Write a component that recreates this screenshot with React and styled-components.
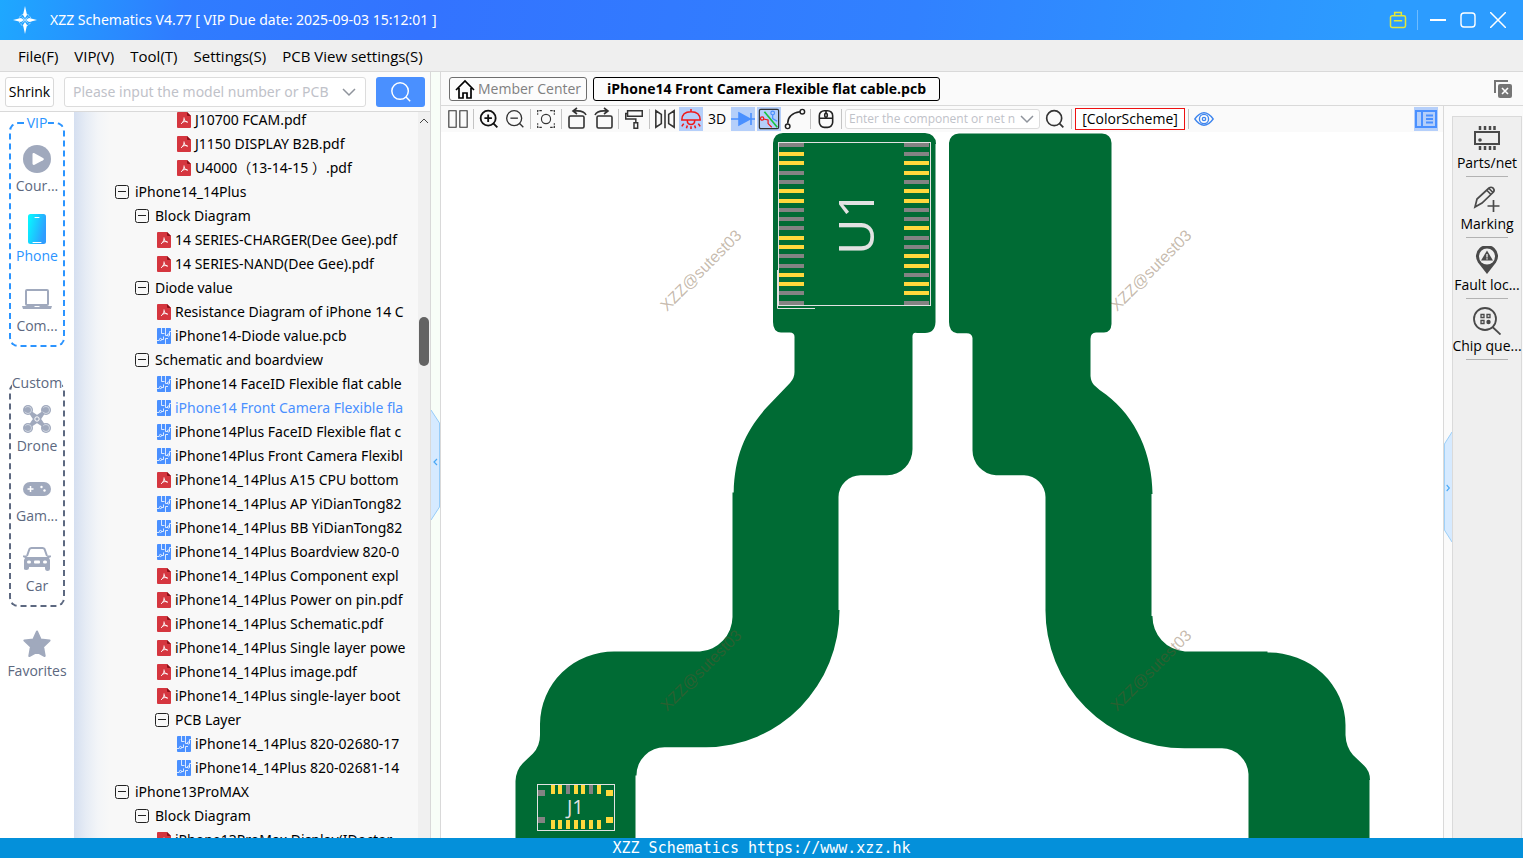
/**
 *
 * SchematicsViewer
 *
 */

import React, { useState } from 'react';
import styled, { createGlobalStyle } from 'styled-components';

const GlobalStyle = createGlobalStyle`
  * {
    box-sizing: border-box;
  }

  body {
    margin: 0;
    overflow: hidden;
  }

  body, button, input {
    font-family: 'Open Sans', 'Noto Sans CJK SC', sans-serif;
    font-size: 14px;
    line-height: 20px;
    color: #000000;
  }

  button {
    padding: 0;
    border: none;
    background: none;
    cursor: pointer;
  }

  svg {
    display: block;
    flex: none;
  }
`;

const Page = styled.div`
  display: flex;
  flex-direction: column;
  height: 100vh;
  background-color: #fafafa;
`;

/* title bar */

const TitleBar = styled.header`
  display: flex;
  align-items: center;
  flex: none;
  height: 40px;
  padding: 0 10px 0 12px;
  color: #ffffff;
  background: linear-gradient(100deg, #1ea8ff 0%, #2f7cff 12%, #3373ff 28%, #3181ff 60%, #2c9cff 90%);
`;

const Title = styled.h1`
  flex: 1;
  margin: 0 0 0 12px;
  font-family: 'Noto Sans', sans-serif;
  font-size: 14px;
  font-weight: 400;
  line-height: 20px;
`;

const WindowButton = styled.button`
  display: flex;
  align-items: center;
  justify-content: center;
  width: 30px;
  height: 30px;
`;

const WindowDivider = styled.span`
  width: 1px;
  height: 20px;
  margin: 0 5px 0 4px;
  background-color: #6fbcff;
`;

const MenuBar = styled.nav`
  display: flex;
  align-items: center;
  flex: none;
  gap: 16px;
  height: 32px;
  padding: 0 18px;
  background-color: #efefef;
  border-bottom: 1px solid #d9d9d9;
`;

const MenuButton = styled.button`
  font-size: 15px;
`;

const Body = styled.div`
  display: flex;
  flex: 1;
  min-height: 0;
`;

/* left pane */

const LeftPane = styled.aside`
  display: flex;
  flex-direction: column;
  flex: none;
  width: 431px;
  border-right: 1px solid #d9d9d9;
  background-color: #fcfcfc;
`;

const SearchRow = styled.form`
  display: flex;
  align-items: center;
  flex: none;
  gap: 10px;
  height: 40px;
  padding: 0 5px;
  border-bottom: 1px solid #d9d9d9;
`;

const ShrinkButton = styled.button`
  width: 49px;
  height: 30px;
  border: 1px solid #d9d9d9;
  border-radius: 3px;
  background-color: #ffffff;
`;

const Combo = styled.label`
  display: flex;
  align-items: center;
  flex: ${({ $small }) => ($small ? '0 0 195px' : 1)};
  min-width: 0;
  height: ${({ $small }) => ($small ? 20 : 30)}px;
  padding: ${({ $small }) => ($small ? '0 5px 0 3px' : '0 9px 0 8px')};
  gap: 3px;
  border: 1px solid #dcdcdc;
  border-radius: 3px;
  background-color: #ffffff;
`;

const ComboInput = styled.input`
  flex: 1;
  min-width: 0;
  padding: 0;
  border: none;
  outline: none;
  background: none;
  font-family: ${({ $small }) => ($small ? "'Open Sans'" : "'Noto Sans'")}, sans-serif;
  font-size: ${({ $small }) => ($small ? 12 : 14)}px;
  line-height: 18px;

  &::placeholder {
    color: #bfc2c9;
    opacity: 1;
  }
`;

const SearchButton = styled.button`
  display: flex;
  align-items: center;
  justify-content: center;
  width: 49px;
  height: 30px;
  border-radius: 3px;
  background-color: #4a90ff;
`;

const LeftContent = styled.div`
  display: flex;
  flex: 1;
  min-height: 0;
`;

const Rail = styled.nav`
  display: flex;
  flex-direction: column;
  align-items: center;
  flex: none;
  width: 74px;
  padding-top: 10px;
  background-color: #ffffff;
`;

const RailGroup = styled.section`
  display: flex;
  flex-direction: column;
  align-items: center;
  flex: none;
  width: 56px;
  height: 225px;
  margin-bottom: 16px;
  border: 2px dashed ${({ $color }) => $color};
  border-radius: 9px;

  & + & {
    margin-top: 19px;
  }
`;

const RailTitle = styled.h2`
  margin: -11px 0 5px;
  font-size: 14px;
  font-weight: 400;
  line-height: 20px;
  color: ${({ $color }) => $color};
  background-color: #ffffff;
`;

const RailButton = styled.button`
  display: flex;
  flex-direction: column;
  align-items: center;
  justify-content: flex-end;
  flex: none;
  gap: 1px;
  height: 60px;
  margin-bottom: 10px;
  padding-bottom: 2px;
  white-space: nowrap;
  color: ${({ $active }) => ($active ? '#2b94ff' : '#5c6880')};
`;

const RailIcon = styled.span`
  display: flex;
  align-items: center;
  justify-content: center;
  width: 32px;
  height: 32px;
`;

const TreePane = styled.div`
  display: flex;
  flex: 1;
  min-width: 0;
  overflow: hidden;
  background: linear-gradient(90deg, #d5dff0 0, #e6ecf5 12px, #f3f5f8 24px, #f8f8f8 36px);
`;

const Tree = styled.ul`
  flex: 1;
  min-width: 0;
  margin: -4px 12px 0 0;
  padding: 0;
  list-style: none;
`;

const TreeRow = styled.li`
  height: 24px;
  padding-left: ${({ $level }) => 21 + $level * 20}px;
`;

const TreeButton = styled.button`
  display: flex;
  align-items: center;
  gap: ${({ $folder }) => ($folder ? 6 : 4)}px;
  width: 100%;
  height: 24px;
  padding-left: ${({ $folder }) => ($folder ? 0 : 2)}px;
  font-family: 'Noto Sans', 'Noto Sans CJK SC', sans-serif;
  white-space: nowrap;
  overflow: hidden;
  color: ${({ $active }) => ($active ? '#4a90ff' : '#000000')};
`;

const ScrollTrack = styled.div`
  display: flex;
  flex-direction: column;
  align-items: center;
  flex: none;
  gap: 193px;
  width: 12px;
  padding-top: 5px;
  background-color: #f0f0f0;
`;

const ScrollThumb = styled.div`
  flex: none;
  width: 10px;
  height: 49px;
  border-radius: 5px;
  background-color: #636363;
`;

const Gutter = styled.div`
  display: flex;
  align-items: flex-start;
  flex: none;
  width: ${({ $side }) => ($side === 'left' ? 10 : 9)}px;
  padding-top: ${({ $side }) => ($side === 'left' ? 337 : 325)}px;
  border-${({ $side }) => ($side === 'left' ? 'right' : 'left')}: 1px solid #d9d9d9;
  background-color: ${({ $side }) => ($side === 'left' ? '#f8fef8' : '#fafafa')};
`;

/* work area */

const WorkArea = styled.main`
  display: flex;
  flex-direction: column;
  flex: 1;
  min-width: 0;
`;

const TabRow = styled.div`
  display: flex;
  align-items: center;
  flex: none;
  gap: 6px;
  height: 34px;
  padding: 0 11px 0 8px;
  border-bottom: 1px solid #d9d9d9;
`;

const Tab = styled.button`
  display: flex;
  align-items: center;
  justify-content: center;
  gap: 3px;
  height: 24px;
  padding: 0 ${({ $active }) => ($active ? 13 : 5)}px;
  border: 1px solid ${({ $active }) => ($active ? '#000000' : '#6e6e6e')};
  border-radius: 3px;
  background-color: #fcfcfc;
  font-weight: ${({ $active }) => ($active ? 700 : 400)};
  color: ${({ $active }) => ($active ? '#000000' : '#808080')};
  white-space: nowrap;
`;

const CloseAll = styled.button`
  margin-left: auto;
`;

const WorkBody = styled.div`
  display: flex;
  flex: 1;
  min-height: 0;
`;

const Viewer = styled.section`
  display: flex;
  flex-direction: column;
  flex: 1;
  min-width: 0;
`;

const Toolbar = styled.div`
  display: flex;
  align-items: center;
  flex: none;
  gap: 2px;
  height: 26px;
  padding: 0 5px;
`;

const ToolButton = styled.button`
  display: flex;
  align-items: center;
  justify-content: center;
  flex: none;
  width: ${({ $wide }) => ($wide ? 26 : 24)}px;
  height: 24px;
  margin-left: ${({ $end }) => ($end ? 'auto' : 0)};
  background-color: ${({ $active }) => ($active ? '#b5cffa' : 'transparent')};
`;

const ToolDivider = styled.span`
  flex: none;
  width: 1px;
  height: 20px;
  margin: 0 1px;
  background-color: #c4c4c4;
`;

const SchemeButton = styled.button`
  flex: none;
  width: 110px;
  height: 22px;
  border: 1px solid #ee1111;
  background-color: #ffffff;
`;

const Canvas = styled.div`
  flex: 1;
  min-height: 0;
  background-color: #ffffff;
`;

const Board = styled.svg`
  width: 100%;
  height: 100%;
`;

const PartLabel = styled.text`
  font-family: 'Open Sans', sans-serif;
  font-size: ${({ $size }) => $size}px;
  fill: #e2e2e2;
`;

const Watermark = styled.text`
  font-family: 'Liberation Sans', sans-serif;
  font-size: 16px;
  fill: rgba(110, 80, 45, 0.4);
`;

const SidePanel = styled.nav`
  display: flex;
  flex-direction: column;
  align-items: center;
  flex: none;
  width: 70px;
  margin: 10px 1px 0 0;
  border: 1px solid #dadada;
  border-bottom: none;
  background-color: #efefef;
`;

const SideButton = styled.button`
  display: flex;
  flex-direction: column;
  align-items: center;
  gap: 1px;
  height: 61px;
  padding-top: 7px;
  white-space: nowrap;

  &::after {
    content: '';
    width: 42px;
    height: 1px;
    margin-top: 2px;
    background-color: #b2b2b2;
  }
`;

const StatusBar = styled.footer`
  flex: none;
  height: 20px;
  font-family: 'DejaVu Sans Mono', monospace;
  font-size: 15px;
  line-height: 20px;
  text-align: center;
  color: #ffffff;
  background-color: #0490da;
`;

/* icons */

const Icon = ({ size = 22, children, ...rest }) => (
  <svg width={size} height={size} viewBox="0 0 24 24" fill="none" stroke="#333333" strokeWidth="1.6" aria-hidden="true" {...rest}>
    {children}
  </svg>
);

const Chevron = () => (
  <svg width="14" height="10" viewBox="0 0 14 10" fill="none" stroke="#8f949c" strokeWidth="1.5" aria-hidden="true">
    <path d="M1 2l6 6 6-6" />
  </svg>
);

const StarLogo = () => (
  <svg width="26" height="30" viewBox="0 0 26 30" aria-hidden="true">
    <circle cx="13" cy="15" r="6" fill="none" stroke="#bfe4ff" strokeDasharray="2 1" />
    <path d="M13 1l2 9-2 3-2-3zM13 29l2-9-2-3-2 3zM1 15l8-2 3 2-3 2zM25 15l-8-2-3 2 3 2z" fill="#ffffff" />
    <path d="M9 11l4 3 4-3-3 4 3 4-4-3-4 3 3-4z" fill="#9ed6ff" />
  </svg>
);

const Toggle = () => (
  <svg width="14" height="14" viewBox="0 0 14 14" fill="none" stroke="#222222" aria-hidden="true">
    <rect x="0.5" y="0.5" width="13" height="13" rx="2" />
    <path d="M3 6.5h8" />
  </svg>
);

const PdfIcon = () => (
  <svg width="14" height="16" viewBox="0 0 14 16" aria-hidden="true">
    <path d="M1 0h9l4 4v11a1 1 0 0 1-1 1H1a1 1 0 0 1-1-1V1a1 1 0 0 1 1-1z" fill="#d5363f" />
    <path d="M10 0l4 4h-3a1 1 0 0 1-1-1z" fill="#8c1019" />
    <path d="M7 5.5c.6 2.2-.6 4.800-3 6.300M7 7c.5 1.800 2 3 4 3.200M5.300 10.300c1.500-.7 3-.9 4.700-.6" fill="none" stroke="#ffffff" />
  </svg>
);

const PcbIcon = () => (
  <svg width="14" height="16" viewBox="0 0 14 16" fill="none" stroke="#ffffff" aria-hidden="true">
    <rect width="14" height="16" rx="1" fill="#4a90ff" stroke="none" />
    <path d="M4.500 0v5.500h3M8.500 0v7.500h2M6.500 8.500v3h-2M8.500 16v-5.500h2.500" strokeWidth="0.8" />
    <path d="M0 12.500h2M12.500 7V3.500H14" strokeWidth="0.8" />
    <circle cx="11.500" cy="7" r="1.100" strokeWidth="0.8" />
    <circle cx="3.500" cy="11.500" r="1.100" strokeWidth="0.8" />
  </svg>
);

const PlayIcon = () => (
  <svg width="28" height="28" viewBox="0 0 28 28" aria-hidden="true">
    <circle cx="14" cy="14" r="14" fill="#a0a9bd" />
    <path d="M9.500 9.500c0-1.300 1-1.700 2-1.200l8.500 4.600c1.100.6 1.100 1.700 0 2.300l-8.500 4.600c-1 .5-2 .1-2-1.200z" fill="#ffffff" />
  </svg>
);

const PhoneIcon = () => (
  <svg width="18" height="30" viewBox="0 0 18 30" aria-hidden="true">
    <defs>
      <linearGradient id="phone" x1="0" y1="0" x2="1" y2="0.4">
        <stop offset="0.1" stopColor="#08f4ff" />
        <stop offset="1" stopColor="#2f9dff" />
      </linearGradient>
    </defs>
    <rect width="18" height="30" rx="2.500" fill="url(#phone)" />
    <path d="M7 3.500h4M5 28.500h8" stroke="#ffffff" strokeLinecap="round" />
  </svg>
);

const LaptopIcon = () => (
  <svg width="30" height="20" viewBox="0 0 30 20" aria-hidden="true">
    <rect x="4" y="1" width="22" height="15" rx="1" fill="none" stroke="#a0a9bd" strokeWidth="2" />
    <path d="M0 17h12l1 1h4l1-1h12l-1 3H1z" fill="#a0a9bd" />
  </svg>
);

const DroneIcon = () => (
  <svg width="30" height="30" viewBox="0 0 30 30" aria-hidden="true">
    <path d="M6 6l9 6 9-6-6 9 6 9-9-6-9 6 6-9z" fill="#a0a9bd" stroke="#a0a9bd" strokeWidth="2" />
    {[[6, 6], [24, 6], [6, 24], [24, 24]].map(([x, y]) => (
      <g key={`${x}-${y}`}>
        <circle cx={x} cy={y} r="5" fill="#a0a9bd" />
        <circle cx={x} cy={y} r="3.500" fill="none" stroke="#e4e8ef" strokeWidth="0.7" strokeDasharray="9 4" />
      </g>
    ))}
    <circle cx="15" cy="15" r="2.200" fill="#a0a9bd" stroke="#ffffff" />
  </svg>
);

const GameIcon = () => (
  <svg width="28" height="14" viewBox="0 0 28 14" aria-hidden="true">
    <rect width="28" height="14" rx="7" fill="#a0a9bd" />
    <path d="M4.500 7h6M7.500 4v6" stroke="#ffffff" strokeWidth="1.500" />
    <circle cx="18.500" cy="5" r="1.200" fill="#ffffff" />
    <circle cx="21.500" cy="8.500" r="1.200" fill="#ffffff" />
  </svg>
);

const CarIcon = () => (
  <svg width="28" height="24" viewBox="0 0 28 24" aria-hidden="true">
    <path d="M4 9L6.500 2Q7 1 8.500 1h11q1.500 0 2 1L24 9" fill="none" stroke="#a0a9bd" strokeWidth="2" />
    <path d="M0 8.500h3l1.500 1.500h19l1.500-1.500h3V10l-2 1 1 2v9q0 2-2.500 2T22 21v-1H6v1q0 2-2.500 2T1 22v-9l1-2-2-1z" fill="#a0a9bd" />
    <rect x="4" y="13.500" width="4" height="3" rx="1.500" fill="#ffffff" />
    <rect x="11" y="13.500" width="6" height="3" rx="1" fill="#ffffff" />
    <rect x="20" y="13.500" width="4" height="3" rx="1.500" fill="#ffffff" />
  </svg>
);

const FavoriteIcon = () => (
  <svg width="28" height="28" viewBox="0 0 28 28" aria-hidden="true">
    <path d="M14 1.500l3.600 8 9 1-6.500 6.200 1.600 9.300L14 21.800 6.300 26l1.600-9.300L1.400 10.500l9-1z" fill="#a0a9bd" stroke="#a0a9bd" strokeWidth="2" strokeLinejoin="round" />
  </svg>
);

const PartsIcon = () => (
  <svg width="28" height="28" viewBox="0 0 28 28" fill="none" stroke="#4a4a4a" aria-hidden="true">
    <rect x="2" y="8" width="24" height="12" strokeWidth="2" />
    <circle cx="7" cy="16" r="1.800" fill="#4a4a4a" stroke="none" />
    <path d="M7 2v4M12 2v4M17 2v4M21.500 2v4M7 22v4M12 22v4M17 22v4M21.500 22v4" strokeWidth="2.500" />
  </svg>
);

const MarkingIcon = () => (
  <svg width="28" height="28" viewBox="0 0 28 28" fill="none" stroke="#4a4a4a" strokeWidth="1.700" aria-hidden="true">
    <path d="M2 22l2-8L16 3q2-1.500 4 0 2 2 .5 4L9 18zM14 5.500l4 4M16 3.500l4 4" />
    <path d="M20.500 15v12M14.500 21h12" />
  </svg>
);

const FaultIcon = () => (
  <svg width="28" height="28" viewBox="0 0 28 28" aria-hidden="true">
    <path d="M14 28L5 16.500A11 11 0 1 1 23 16.500z" fill="#4a4a4a" />
    <circle cx="14" cy="10.500" r="8" fill="#efefef" />
    <path d="M14 4.500l6 10H8z" fill="#4a4a4a" />
    <path d="M14 8v3.500M14 12.300v1.200" stroke="#efefef" strokeWidth="1.300" />
  </svg>
);

const ChipIcon = () => (
  <svg width="28" height="28" viewBox="0 0 28 28" fill="none" stroke="#4a4a4a" strokeWidth="1.800" aria-hidden="true">
    <circle cx="12" cy="12" r="11" />
    <path d="M19.500 20l8 7.500" />
    <path d="M8 7.500h3v3H8zM14 7.500h3v3h-3zM8 13.500h3v3H8z" strokeWidth="1.300" />
    <circle cx="15.500" cy="15" r="2.200" fill="#4a4a4a" stroke="none" />
  </svg>
);

const MagnifierIcon = ({ children, ...rest }) => (
  <Icon {...rest}>
    <circle cx="11" cy="11" r="9" />
    <path d="M17.500 17.500l4.500 4.500" />
    {children}
  </Icon>
);

const HandleIcon = ({ right }) => (
  <svg width={right ? 8 : 9} height="112" viewBox="0 0 9 112" preserveAspectRatio="none" fill="none" aria-hidden="true">
    <path d={right ? 'M9 1L.5 13v86L9 111' : 'M0 1l8.500 13v84L0 111'} fill="#d6eaff" stroke="#96ccf8" />
    <path d={right ? 'M3 54l3 3-3 3' : 'M6 50l-3 3 3 3'} stroke="#49a8f5" strokeWidth="1.200" />
  </svg>
);

/* data */

const menus = ['File(F)', 'VIP(V)', 'Tool(T)', 'Settings(S)', 'PCB View settings(S)'];

const railGroups = [
  {
    title: 'VIP',
    color: '#2b94ff',
    items: [
      { label: 'Cour...', icon: <PlayIcon /> },
      { label: 'Phone', icon: <PhoneIcon /> },
      { label: 'Com...', icon: <LaptopIcon /> },
    ],
  },
  {
    title: 'Custom',
    color: '#5c6880',
    items: [
      { label: 'Drone', icon: <DroneIcon /> },
      { label: 'Gam...', icon: <GameIcon /> },
      { label: 'Car', icon: <CarIcon /> },
    ],
  },
];

const treeItems = [
  [4, 'pdf', 'J10700 FCAM.pdf'],
  [4, 'pdf', 'J1150 DISPLAY B2B.pdf'],
  [4, 'pdf', 'U4000（13-14-15 ）.pdf'],
  [1, 'folder', 'iPhone14_14Plus'],
  [2, 'folder', 'Block Diagram'],
  [3, 'pdf', '14 SERIES-CHARGER(Dee Gee).pdf'],
  [3, 'pdf', '14 SERIES-NAND(Dee Gee).pdf'],
  [2, 'folder', 'Diode value'],
  [3, 'pdf', 'Resistance Diagram of iPhone 14 C'],
  [3, 'pcb', 'iPhone14-Diode value.pcb'],
  [2, 'folder', 'Schematic and boardview'],
  [3, 'pcb', 'iPhone14 FaceID Flexible flat cable'],
  [3, 'pcb', 'iPhone14 Front Camera Flexible fla'],
  [3, 'pcb', 'iPhone14Plus FaceID Flexible flat c'],
  [3, 'pcb', 'iPhone14Plus Front Camera Flexibl'],
  [3, 'pdf', 'iPhone14_14Plus A15 CPU bottom'],
  [3, 'pcb', 'iPhone14_14Plus AP YiDianTong82'],
  [3, 'pcb', 'iPhone14_14Plus BB YiDianTong82'],
  [3, 'pcb', 'iPhone14_14Plus Boardview 820-0'],
  [3, 'pdf', 'iPhone14_14Plus Component expl'],
  [3, 'pdf', 'iPhone14_14Plus Power on pin.pdf'],
  [3, 'pdf', 'iPhone14_14Plus Schematic.pdf'],
  [3, 'pdf', 'iPhone14_14Plus Single layer powe'],
  [3, 'pdf', 'iPhone14_14Plus image.pdf'],
  [3, 'pdf', 'iPhone14_14Plus single-layer boot'],
  [3, 'folder', 'PCB Layer'],
  [4, 'pcb', 'iPhone14_14Plus 820-02680-17'],
  [4, 'pcb', 'iPhone14_14Plus 820-02681-14'],
  [1, 'folder', 'iPhone13ProMAX'],
  [2, 'folder', 'Block Diagram'],
  [3, 'pdf', 'iPhone13ProMax Display(IDoctor.'],
];

const treeIcons = {
  folder: <Toggle />,
  pdf: <PdfIcon />,
  pcb: <PcbIcon />,
};

const sideItems = [
  { label: 'Parts/net', icon: <PartsIcon /> },
  { label: 'Marking', icon: <MarkingIcon /> },
  { label: 'Fault loc...', icon: <FaultIcon /> },
  { label: 'Chip que...', icon: <ChipIcon /> },
];

// null is a divider
const tools = [
  {
    name: 'Split view',
    icon: <Icon strokeWidth="1.200"><path d="M2 3h8v18H2zM14 3h8v18h-8z" /></Icon>,
  },
  null,
  {
    name: 'Zoom in',
    icon: (
      <MagnifierIcon size={20} stroke="#111111" strokeWidth="2.200">
        <path d="M6.500 11h9M11 6.500v9" />
      </MagnifierIcon>
    ),
  },
  {
    name: 'Zoom out',
    icon: (
      <MagnifierIcon size={20}>
        <path d="M6.500 11h9" />
      </MagnifierIcon>
    ),
  },
  null,
  {
    name: 'Fit',
    icon: (
      <Icon size={20} strokeWidth="1.400">
        <path d="M7 2H2v5M17 2h5v5M7 22H2v-5M17 22h5v-5" strokeDasharray="3 1" />
        <circle cx="12" cy="12" r="5.500" />
      </Icon>
    ),
  },
  null,
  {
    name: 'Rotate left',
    icon: (
      <Icon size={24}>
        <rect x="4" y="9" width="15" height="12" rx="1.500" />
        <path d="M21 8q-2-5-12-4M12 1L8 4l4 3" />
      </Icon>
    ),
  },
  {
    name: 'Rotate right',
    icon: (
      <Icon size={24}>
        <rect x="6" y="9" width="15" height="12" rx="1.500" />
        <path d="M4 8q2-5 12-4M13 1l4 3-4 3" />
      </Icon>
    ),
  },
  null,
  {
    name: 'Paint',
    icon: (
      <Icon>
        <path d="M5 3h16v6H5zM5 6H3v6h11v4M12 16h4v6h-4z" />
      </Icon>
    ),
  },
  null,
  {
    name: 'Mirror',
    icon: (
      <Icon strokeWidth="1.700">
        <path d="M2 3l6 4v10l-6 4zM22 3l-6 4v10l6 4zM12 2v20" />
      </Icon>
    ),
  },
  {
    name: 'Lamp',
    active: true,
    icon: (
      <Icon stroke="#f01818" strokeWidth="1.700">
        <path d="M2 13q0-9 10-9t10 9zM12 1v3M8 14q0 4 4 4t4-4M4 17l-2 3M20 17l2 3M8 19l-1 3M16 19l1 3M12 20v3" />
      </Icon>
    ),
  },
  { name: '3D', icon: '3D' },
  {
    name: 'Diode',
    active: true,
    icon: (
      <Icon size={24} stroke="#4a90ff">
        <path d="M0 12h24M20 6v12" />
        <path d="M8 6l11 6-11 6z" fill="#4a90ff" />
      </Icon>
    ),
  },
  {
    name: 'Route',
    active: true,
    icon: (
      <Icon strokeWidth="1.300">
        <rect x="1.500" y="1.500" width="21" height="21" rx="1.500" />
        <path d="M6 12l5 1v4l4 4" stroke="#f01818" />
        <circle cx="4.500" cy="11.500" r="1.800" stroke="#f01818" />
        <path d="M7 4l14 17" stroke="#19c33c" strokeWidth="1.800" />
        <path d="M16 7.500v4l5 3" stroke="#4a90ff" />
        <circle cx="16" cy="5.500" r="2" stroke="#4a90ff" />
      </Icon>
    ),
  },
  {
    name: 'Curve',
    icon: (
      <Icon stroke="#222222">
        <circle cx="4" cy="20" r="2.500" />
        <circle cx="20" cy="4" r="2.500" />
        <path d="M4 17Q4 6 17.500 4" />
      </Icon>
    ),
  },
  null,
  {
    name: 'Mouse',
    icon: (
      <Icon size={20} stroke="#222222" strokeWidth="1.900">
        <rect x="4" y="2" width="16" height="20" rx="6" />
        <path d="M4 11h16M12 2v3" />
        <rect x="10.500" y="5" width="3" height="5" rx="1.500" fill="#fafafa" />
      </Icon>
    ),
  },
  null,
];

const G = '#838383';
const Y = '#ffd83c';
const pinRows = [143, 152, 161, 171, 180, 189, 199, 208, 217, 226, 236, 245, 254, 264, 273, 282, 291, 301];
const leftPins = [G, Y, Y, G, G, Y, Y, G, G, G, Y, Y, G, G, Y, Y, G, G];
const rightPins = [G, G, Y, Y, G, Y, Y, G, G, Y, G, G, Y, Y, G, Y, Y, G];
const j1Columns = [551, 558, 566, 574, 581, 589, 597];
const j1Pins = [Y, Y, G, Y, Y, G, Y];
const watermarks = [[667, 312], [1117, 312], [667, 712], [1117, 712]];

const PcbBoard = () => (
  <Board viewBox="441 132 1002 706" preserveAspectRatio="xMidYMin meet" role="img" aria-label="Flexible flat cable board">
    <g fill="#006b34">
      <path d="M783 133H925Q936 134 936 144H935.500V322Q935 333 925 333H917Q912 332 912.500 338V449A26 26 0 0 1 887 475.300H861A22 22 0 0 0 838.500 497V610H839.500A134 137 0 0 1 706 747.300H665A28 28 0 0 0 636.500 775.500H635.500V838H515.500V781Q516 770 523 763L533 753.500Q540 746 540 735V724A74 73 0 0 1 615 651.500H700A35 35 0 0 0 732.500 617V492.500H733.700C734.500 455 746 430 767 407L790 383Q794.500 378 794.500 372V338Q795 332 789 332.500H781Q773 332 773 322V143Q774 133 783 133z" />
      <path d="M959 133.500H1102Q1111 134 1111.500 143V324Q1111 332.500 1104 332.500H1096Q1090.500 332.500 1090.500 339V376Q1091 382 1094 385Q1099 390 1106 394.500C1136 417 1152.500 455 1152.500 494H1151.500V616H1152.500A35 35 0 0 0 1185 651.500H1267.500V652.500A77 73 0 0 1 1345.500 725V735Q1346 747 1353 755L1364 765.500Q1370 771 1370 780H1369.500V838H1248.500V774A27 27 0 0 0 1222 748.300H1185A139 138 0 0 1 1045.500 608V497A22 22 0 0 0 1024 475.300H996A25 25 0 0 1 972.500 450V338Q972 333 966 333.300H957Q949 332 949 322V143Q950 134 959 133.500z" />
    </g>
    <g fill="none" stroke="#e2e2e2">
      <rect x="778.5" y="142.5" width="152" height="163" />
      <path d="M777.500 270V308.500H815" />
      <rect x="537.5" y="784.5" width="77" height="46" />
    </g>
    {pinRows.map((y, i) => (
      <g key={y}>
        <rect x="779" y={y} width="25" height="4" fill={leftPins[i]} />
        <rect x="904" y={y} width="25" height="4" fill={rightPins[i]} />
      </g>
    ))}
    {j1Columns.map((x, i) => (
      <g key={x}>
        <rect x={x} y="785" width="4" height="9" fill={j1Pins[i]} />
        <rect x={x} y="820" width="4" height="9" fill={Y} />
      </g>
    ))}
    {[790, 817].map(y => (
      <g key={y}>
        <rect x="538" y={y} width="7" height="6" fill={G} />
        <rect x="606" y={y} width="7" height="6" fill={Y} />
      </g>
    ))}
    <PartLabel $size={50} transform="translate(874 255) rotate(-90)">U1</PartLabel>
    <PartLabel $size={20} x="567" y="814">J1</PartLabel>
    {watermarks.map(([x, y]) => (
      <Watermark key={`${x}-${y}`} transform={`translate(${x} ${y}) rotate(-45)`}>
        XZZ@sutest03
      </Watermark>
    ))}
  </Board>
);

const App = () => {
  const [category, setCategory] = useState('Phone');
  const [selected, setSelected] = useState(12);

  return (
    <Page>
      <GlobalStyle />
      <TitleBar>
        <StarLogo />
        <Title>XZZ Schematics V4.77 [ VIP Due date: 2025-09-03 15:12:01 ]</Title>
        <WindowButton aria-label="Toolbox">
          <Icon size={20} stroke="#e3e838" strokeWidth="1.800">
            <path d="M8 7V3h8v4M7 13h10" />
            <rect x="3" y="7" width="18" height="14" rx="2" />
          </Icon>
        </WindowButton>
        <WindowDivider />
        <WindowButton aria-label="Minimize">
          <svg width="16" height="16" stroke="#ffffff" strokeWidth="2" aria-hidden="true">
            <path d="M0 8h16" />
          </svg>
        </WindowButton>
        <WindowButton aria-label="Maximize">
          <svg width="16" height="16" fill="none" stroke="#ffffff" strokeWidth="1.400" aria-hidden="true">
            <rect x="1" y="1" width="14" height="14" rx="3" />
          </svg>
        </WindowButton>
        <WindowButton aria-label="Close">
          <svg width="16" height="16" stroke="#ffffff" strokeWidth="1.500" aria-hidden="true">
            <path d="M0 0l16 16M16 0L0 16" />
          </svg>
        </WindowButton>
      </TitleBar>
      <MenuBar>
        {menus.map(menu => (
          <MenuButton key={menu} type="button">{menu}</MenuButton>
        ))}
      </MenuBar>
      <Body>
        <LeftPane>
          <SearchRow onSubmit={event => event.preventDefault()}>
            <ShrinkButton type="button">Shrink</ShrinkButton>
            <Combo>
              <ComboInput aria-label="Model number" placeholder="Please input the model number or PCB" />
              <Chevron />
            </Combo>
            <SearchButton aria-label="Search">
              <MagnifierIcon stroke="#ffffff" />
            </SearchButton>
          </SearchRow>
          <LeftContent>
            <Rail>
              {railGroups.map(group => (
                <RailGroup key={group.title} $color={group.color}>
                  <RailTitle $color={group.color}>{group.title}</RailTitle>
                  {group.items.map(item => (
                    <RailButton
                      key={item.label}
                      $active={category === item.label}
                      onClick={() => setCategory(item.label)}
                    >
                      <RailIcon>{item.icon}</RailIcon>
                      {item.label}
                    </RailButton>
                  ))}
                </RailGroup>
              ))}
              <RailButton onClick={() => setCategory('Favorites')} $active={category === 'Favorites'}>
                <RailIcon><FavoriteIcon /></RailIcon>
                Favorites
              </RailButton>
            </Rail>
            <TreePane>
              <Tree>
                {treeItems.map(([level, type, name], i) => (
                  <TreeRow key={`${i}-${name}`} $level={level}>
                    <TreeButton
                      $folder={type === 'folder'}
                      $active={selected === i}
                      onClick={() => setSelected(i)}
                    >
                      {treeIcons[type]}
                      {name}
                    </TreeButton>
                  </TreeRow>
                ))}
              </Tree>
              <ScrollTrack>
                <svg width="10" height="7" fill="none" stroke="#444444" aria-hidden="true">
                  <path d="M1 6l4-4 4 4" />
                </svg>
                <ScrollThumb />
              </ScrollTrack>
            </TreePane>
          </LeftContent>
        </LeftPane>
        <Gutter $side="left">
          <button type="button" aria-label="Collapse tree"><HandleIcon /></button>
        </Gutter>
        <WorkArea>
          <TabRow>
            <Tab>
              <svg width="20" height="20" viewBox="0 0 20 20" fill="none" stroke="#000000" strokeWidth="1.700" aria-hidden="true">
                <path d="M1 11l9-9 9 9M4 9v10h4v-5h4v5h4V9" />
              </svg>
              Member Center
            </Tab>
            <Tab $active>iPhone14 Front Camera Flexible flat cable.pcb</Tab>
            <CloseAll aria-label="Close all tabs">
              <svg width="18" height="18" viewBox="0 0 18 18" fill="none" aria-hidden="true">
                <path d="M1 13V1h13" stroke="#757575" strokeWidth="2" />
                <rect x="4" y="4" width="14" height="14" rx="2" fill="#757575" />
                <path d="M8 8l6 6M14 8l-6 6" stroke="#ffffff" strokeWidth="1.600" />
              </svg>
            </CloseAll>
          </TabRow>
          <WorkBody>
            <Viewer>
              <Toolbar>
                {tools.map((tool, i) =>
                  tool ? (
                    <ToolButton key={tool.name} $active={tool.active} aria-label={tool.name}>
                      {tool.icon}
                    </ToolButton>
                  ) : (
                    <ToolDivider key={i} />
                  )
                )}
                <Combo $small>
                  <ComboInput $small aria-label="Component or net" placeholder="Enter the component or net n" />
                  <Chevron />
                </Combo>
                <ToolButton $wide aria-label="Find"><MagnifierIcon size={20} strokeWidth="2" /></ToolButton>
                <ToolDivider />
                <SchemeButton>[ColorScheme]</SchemeButton>
                <ToolDivider />
                <ToolButton aria-label="Visibility">
                  <Icon size={20} stroke="#3f86ee">
                    <path d="M1 12Q12-3 23 12 12 27 1 12z" />
                    <circle cx="12" cy="12" r="5.500" />
                    <circle cx="12" cy="12" r="2" />
                  </Icon>
                </ToolButton>
                <ToolButton $active $end aria-label="Toggle panel">
                  <Icon size={24} stroke="#4a90ff" strokeWidth="2">
                    <path d="M2 4h20v16H2zM8 4v16M12 8.500h7M12 12h7M12 15.500h7" />
                  </Icon>
                </ToolButton>
              </Toolbar>
              <Canvas>
                <PcbBoard />
              </Canvas>
            </Viewer>
            <Gutter $side="right">
              <button type="button" aria-label="Collapse panel"><HandleIcon right /></button>
            </Gutter>
            <SidePanel>
              {sideItems.map(item => (
                <SideButton key={item.label}>
                  {item.icon}
                  {item.label}
                </SideButton>
              ))}
            </SidePanel>
          </WorkBody>
        </WorkArea>
      </Body>
      <StatusBar>XZZ Schematics https://www.xzz.hk</StatusBar>
    </Page>
  );
};

export default App;
